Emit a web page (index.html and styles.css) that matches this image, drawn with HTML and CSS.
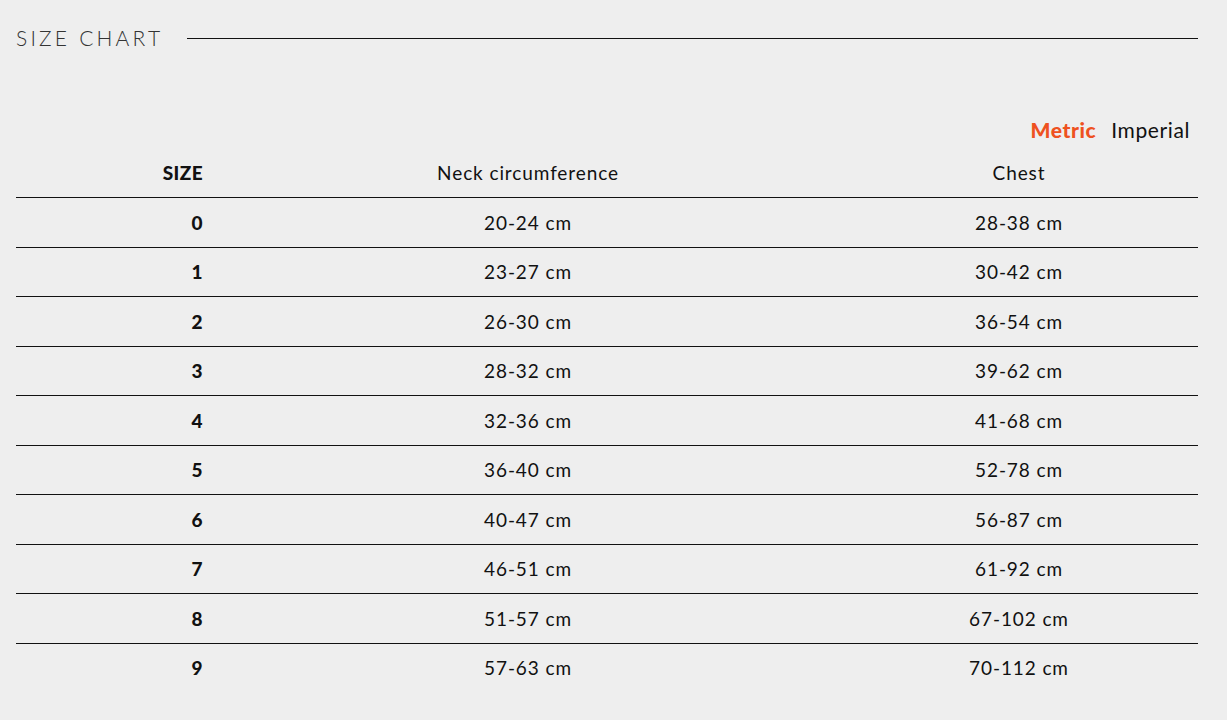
FILE: index.html
```html
<!DOCTYPE html>
<html>
<head>
<meta charset="utf-8">
<link rel="stylesheet" href="styles.css">
</head>
<body>
<div class="page">
  <div class="title-row">
    <h2 class="title">SIZE CHART</h2>
    <div class="title-line"></div>
  </div>
  <div class="units">
    <span class="unit active">Metric</span>
    <span class="unit">Imperial</span>
  </div>
  <div class="chart">
    <div class="row head">
      <div class="c size">SIZE</div>
      <div class="c">Neck circumference</div>
      <div class="c">Chest</div>
    </div>
    <div class="row"><div class="c size">0</div><div class="c">20-24 cm</div><div class="c">28-38 cm</div></div>
    <div class="row"><div class="c size">1</div><div class="c">23-27 cm</div><div class="c">30-42 cm</div></div>
    <div class="row"><div class="c size">2</div><div class="c">26-30 cm</div><div class="c">36-54 cm</div></div>
    <div class="row"><div class="c size">3</div><div class="c">28-32 cm</div><div class="c">39-62 cm</div></div>
    <div class="row"><div class="c size">4</div><div class="c">32-36 cm</div><div class="c">41-68 cm</div></div>
    <div class="row"><div class="c size">5</div><div class="c">36-40 cm</div><div class="c">52-78 cm</div></div>
    <div class="row"><div class="c size">6</div><div class="c">40-47 cm</div><div class="c">56-87 cm</div></div>
    <div class="row"><div class="c size">7</div><div class="c">46-51 cm</div><div class="c">61-92 cm</div></div>
    <div class="row"><div class="c size">8</div><div class="c">51-57 cm</div><div class="c">67-102 cm</div></div>
    <div class="row"><div class="c size">9</div><div class="c">57-63 cm</div><div class="c">70-112 cm</div></div>
  </div>
</div>
</body>
</html>
```

FILE: styles.css
```css
html, body {
  margin: 0;
  padding: 0;
  background: #eeeeee;
}
body {
  font-family: "Lato", "Liberation Sans", sans-serif;
  color: #111;
}
.page {
  padding: 26px 29px 0 16px;
}
.title-row {
  display: flex;
  align-items: center;
  height: 24px;
}
.title {
  margin: 0;
  font-size: 21px;
  font-weight: 300;
  letter-spacing: 3.2px;
  line-height: 24px;
  color: #333;
  white-space: nowrap;
}
.title-line {
  flex: 1;
  height: 1px;
  background: #111;
  margin-left: 24px;
}
.units {
  display: flex;
  justify-content: flex-end;
  gap: 15px;
  margin-top: 68px;
  padding-right: 8px;
  line-height: 24px;
  font-size: 21px;
  letter-spacing: 0.6px;
}
.unit {
  font-weight: 400;
  color: #111;
}
.unit.active {
  font-weight: 900;
  color: #ee5120;
}
.chart {
  margin-top: 6px;
}
.row {
  display: grid;
  grid-template-columns: 200px 624px 1fr;
  height: 49.5px;
  box-sizing: border-box;
  border-top: 1px solid #111;
  align-items: center;
  font-size: 19px;
  letter-spacing: 0.9px;
}
.row.head {
  border-top: none;
  height: 49px;
}
.c {
  text-align: center;
}
.c.size {
  text-align: right;
  padding-right: 13px;
  font-weight: 900;
  letter-spacing: 0.4px;
}
```
